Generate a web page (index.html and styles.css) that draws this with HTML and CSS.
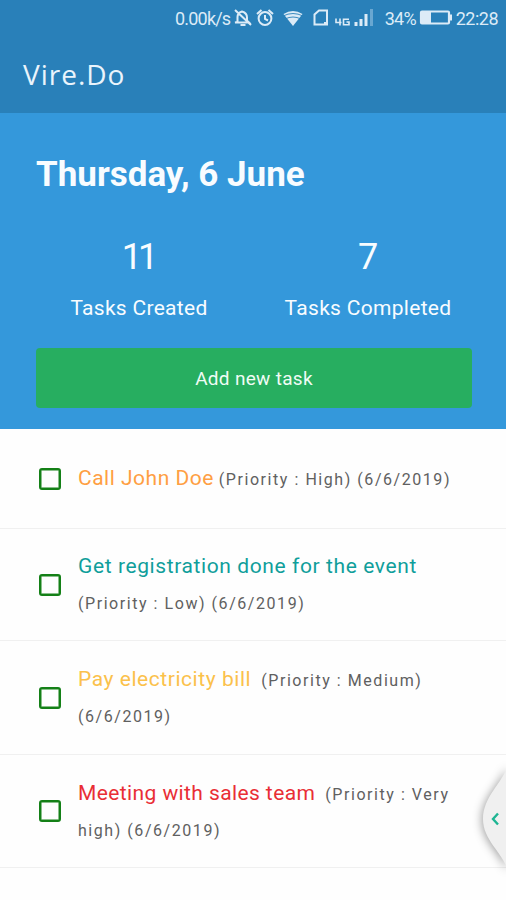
FILE: index.html
```html
<!DOCTYPE html>
<html lang="en">
<head>
<meta charset="utf-8">
<meta name="viewport" content="width=device-width">
<title>Vire.Do</title>
<link rel="stylesheet" href="styles.css">
</head>
<body>
<header class="appbar">
  <div class="status">
    <span class="speed">0.00k/s</span>
    <svg class="status-icons" width="148" height="24" viewBox="0 0 148 24" fill="none" stroke="#dcebf7" stroke-width="2">
      <path d="M5.500 16V11q0-4 4.500-5.500 5 1.500 5 6v3l2 2H3zM8.500 19h5M3 4l16 15"/>
      <circle cx="33" cy="12.500" r="6.400"/><path d="M33 9v4l3 1.500M25 8l4.500-4M41 8l-4.500-4"/>
      <path d="M51.500 8q9.500-6 19 0l-9.500 12z" fill="#dcebf7" stroke="none"/><path d="M51 10q10-5 20 0M53 13q8-4 16 0" stroke="#2980b9" stroke-width=".9"/>
      <path d="M87 4.500H95v14H82.500V8.500z" stroke-width="2"/><path d="M92 16h4v3h-4z" fill="#dcebf7" stroke="none"/>
      <path d="M104 12.500v4h5.500M108 12.500v7M117 13.200h-5.500v5.500h5.500v-2.700h-2.500" stroke-width="1.600"/>
      <path d="M124 20v-4M129 20v-7M134 20V8" stroke-width="3"/><path d="M139.500 20V3" stroke="#69a7d1" stroke-width="3"/>
    </svg>
    <span class="percent">34%</span>
    <svg class="battery" width="34" height="24" viewBox="0 0 34 24"><rect x="2" y="5.500" width="28" height="12" rx="1" fill="none" stroke="#dcebf7" stroke-width="2.200"/><path d="M3 6h9v11H3zM30 8.500h3v6h-3z" fill="#dcebf7"/></svg>
    <span class="clock">22:28</span>
  </div>
  <h1 class="brand">Vire.Do</h1>
</header>
<section class="summary">
  <h2 class="date">Thursday, 6 June</h2>
  <div class="stats">
    <div class="stat"><div class="count eleven">11</div><div class="label">Tasks Created</div></div>
    <div class="stat"><div class="count">7</div><div class="label">Tasks Completed</div></div>
  </div>
  <button class="add">Add new task</button>
</section>
<main class="tasks">
  <div class="task single"><span class="box"></span><p class="text"><span class="name high">Call John Doe</span><span class="meta">(Priority : High) (6/6/2019)</span></p></div>
  <div class="task second"><span class="box"></span><p class="text"><span class="name low">Get registration done for the event</span><br><span class="meta">(Priority : Low) (6/6/2019)</span></p></div>
  <div class="task"><span class="box"></span><p class="text"><span class="name medium">Pay electricity bill</span><span class="meta">(Priority : Medium)<br>(6/6/2019)</span></p></div>
  <div class="task last"><span class="box"></span><p class="text"><span class="name very">Meeting with sales team</span><span class="meta">(Priority : Very<br>high) (6/6/2019)</span></p></div>
</main>
<svg class="handle" width="40" height="130" viewBox="0 0 40 130">
  <path class="tab" d="M42 12C36 29 17 43 17 65C17 86 36 98 42 116z"/>
  <path d="M32 59.500l-5 5.500 5 5.500" fill="none" stroke="#1eb593" stroke-width="2.400"/>
</svg>
</body>
</html>
```

FILE: styles.css
```css
* { box-sizing: border-box; }
body { margin: 0; width: 506px; height: 900px; overflow: hidden; position: relative; background: #fefefe; font-family: Roboto, "Liberation Sans", sans-serif; }
.appbar { height: 113px; background: #2980b9; color: #eaf4fc; }
.status { height: 36px; padding: 0 8px 0 175px; display: flex; align-items: center; font-size: 18px; white-space: nowrap; color: #dcebf7; }
.speed { width: 57px; letter-spacing: -0.8px; }
.status-icons { flex: none; margin-right: 5px; }
.percent { width: 34px; letter-spacing: -0.8px; }
.battery { flex: none; margin-right: 3px; }
.clock { letter-spacing: -0.5px; }
.brand { margin: 0; padding: 19px 0 0 23px; font: 400 28px/38px "Open Sans", sans-serif; letter-spacing: 1px; }
.summary { height: 316px; padding: 37px 34px 0 36px; background: #3498db; color: #f8fcff; }
.date { margin: 0; font-size: 35px; line-height: 50px; font-weight: 700; white-space: nowrap; }
.stats { display: flex; margin-top: 34px; }
.stat { text-align: center; flex: none; }
.stat:first-child { width: 206px; }
.stat:last-child { width: 252px; }
.count { font-size: 36px; line-height: 46px; }
.eleven { letter-spacing: -4px; padding-right: 2px; }
.label { font-size: 21px; line-height: 30px; margin-top: 13px; letter-spacing: 0.3px; white-space: nowrap; }
.add { display: block; width: 436px; height: 60px; margin-top: 25px; border: 0; border-radius: 4px; background: #27ae60; color: #f0fcf5; font: 400 19px Roboto, sans-serif; letter-spacing: 0.3px; }
.task { display: flex; align-items: center; height: 114px; padding: 0 0 0 39px; border-bottom: 1px solid #f0f0f0; }
.single { height: 100px; }
.second { height: 112px; }
.last { height: 113px; }
.box { flex: none; width: 22px; height: 22px; border: 2px solid #148017; box-shadow: inset 0 0 0 0.5px #148017; border-radius: 3px; margin-right: 17px; }
.text { margin: 0; padding-top: 3px; font-size: 16px; line-height: 36px; white-space: nowrap; }
.name { font-size: 21px; line-height: 1; letter-spacing: 0.4px; margin-right: 10px; }
.meta { font-size: 16px; color: #606060; letter-spacing: 1.55px; }
.high { color: #ff9f43; letter-spacing: 0.5px; margin-right: 5px; }
.low { color: #109e9b; letter-spacing: 0.6px; }
.medium { color: #fbc14b; letter-spacing: 0.55px; }
.very { color: #e92e35; }
.handle { position: absolute; left: 466px; top: 754px; }
.tab { fill: #f0f0f0; filter: drop-shadow(-1px 1px 5px rgba(0,0,0,.38)); }
```
